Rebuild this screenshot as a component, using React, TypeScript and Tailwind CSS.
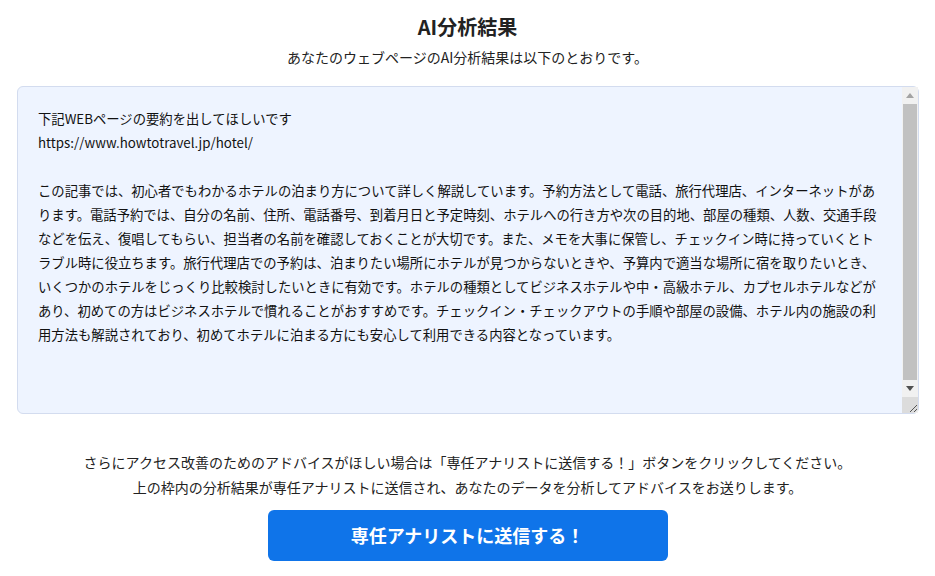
const SUMMARY = `下記WEBページの要約を出してほしいです
https://www.howtotravel.jp/hotel/

この記事では、初心者でもわかるホテルの泊まり方について詳しく解説しています。予約方法として電話、旅行代理店、インターネットがあります。電話予約では、自分の名前、住所、電話番号、到着月日と予定時刻、ホテルへの行き方や次の目的地、部屋の種類、人数、交通手段などを伝え、復唱してもらい、担当者の名前を確認しておくことが大切です。また、メモを大事に保管し、チェックイン時に持っていくとトラブル時に役立ちます。旅行代理店での予約は、泊まりたい場所にホテルが見つからないときや、予算内で適当な場所に宿を取りたいとき、いくつかのホテルをじっくり比較検討したいときに有効です。ホテルの種類としてビジネスホテルや中・高級ホテル、カプセルホテルなどがあり、初めての方はビジネスホテルで慣れることがおすすめです。チェックイン・チェックアウトの手順や部屋の設備、ホテル内の施設の利用方法も解説されており、初めてホテルに泊まる方にも安心して利用できる内容となっています。`

// classic-style scrollbar drawn over the textarea's right edge
function FakeScrollbar() {
    return (
        <div className="absolute top-[1px] right-[1px] bottom-[1px] flex w-[16px] flex-col bg-[#f1f1f1]">
            <div className="flex h-[17px] items-center justify-center">
                <svg width="8" height="5" viewBox="0 0 8 5"><path d="M4 0L8 5H0Z" fill="#a3a3a3" /></svg>
            </div>
            <div className="flex-1 px-[1px]">
                <div className="h-full bg-[#c1c1c1]" />
            </div>
            <div className="flex h-[17px] items-center justify-center">
                <svg width="8" height="5" viewBox="0 0 8 5"><path d="M0 0H8L4 5Z" fill="#505050" /></svg>
            </div>
            <div className="flex h-[16px] items-end justify-end bg-[#dcdcdc] rounded-br-[5px]">
                <svg width="10" height="10" viewBox="0 0 10 10">
                    <path d="M9 2L2 9M9 6L6 9" stroke="#555" strokeWidth="1" />
                </svg>
            </div>
        </div>
    )
}

export default function App() {
    return (
        <div className="flex min-h-[576px] flex-col items-center bg-white text-[#222] font-['Noto_Sans_CJK_JP','Noto_Sans',sans-serif]">
            <h1 className="mt-[13px] text-[20px] leading-[28px] font-bold">AI分析結果</h1>
            <p className="mt-[6px] text-[14px] leading-[20px]">あなたのウェブページのAI分析結果は以下のとおりです。</p>

            <div className="relative mt-[19px] ml-[17px] h-[328px] w-[902px] self-start">
                <textarea
                    readOnly
                    defaultValue={SUMMARY}
                    className="block h-full w-full resize-none overflow-hidden rounded-[6px] border border-[#d3dcef] bg-[#eef4ff] pt-[20px] pb-[20px] pl-[20px] pr-[37px] text-[13.333px] leading-[24px] text-[#111] outline-none font-['Noto_Sans_CJK_JP','Noto_Sans',sans-serif]"
                />
                <FakeScrollbar />
            </div>

            <div className="mt-[36px] text-center text-[14px] leading-[25px]">
                <p>さらにアクセス改善のためのアドバイスがほしい場合は「専任アナリストに送信する！」ボタンをクリックしてください。</p>
                <p>上の枠内の分析結果が専任アナリストに送信され、あなたのデータを分析してアドバイスをお送りします。</p>
            </div>

            <button className="mt-[10px] h-[51px] w-[400px] rounded-[6px] bg-[#0f74e9] text-[18px] font-bold text-white">
                専任アナリストに送信する！
            </button>
        </div>
    )
}
